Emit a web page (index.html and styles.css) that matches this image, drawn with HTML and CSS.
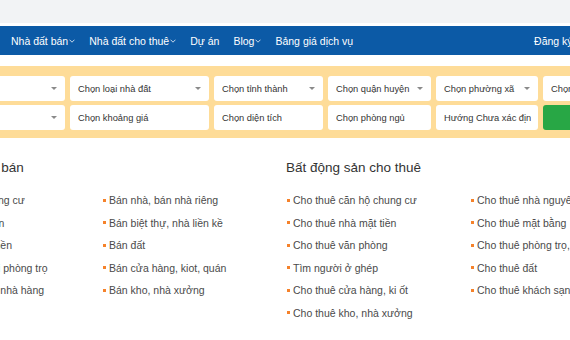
FILE: index.html
```html
<!DOCTYPE html>
<html lang="vi">
<head>
<meta charset="utf-8">
<title>Nhà đất</title>
<link rel="stylesheet" href="styles.css">
</head>
<body>
<div class="topbar"></div>
<nav class="nav">
  <div class="nav-inner">
    <a class="nav-item">Nhà đất bán<svg class="chev" viewBox="0 0 6 4"><path d="M0.5 0.7 L3 3.2 L5.5 0.7"/></svg></a>
    <a class="nav-item">Nhà đất cho thuê<svg class="chev" viewBox="0 0 6 4"><path d="M0.5 0.7 L3 3.2 L5.5 0.7"/></svg></a>
    <a class="nav-item">Dự án</a>
    <a class="nav-item">Blog<svg class="chev" viewBox="0 0 6 4"><path d="M0.5 0.7 L3 3.2 L5.5 0.7"/></svg></a>
    <a class="nav-item">Bảng giá dịch vụ</a>
    <div class="nav-right">
      <a class="nav-item">Đăng ký</a>
      <a class="nav-item">Đăng nhập</a>
    </div>
  </div>
</nav>

<section class="search">
  <div class="search-grid">
    <div class="field select"><span>Nhà đất bán</span></div>
    <div class="field select"><span>Chọn loại nhà đất</span></div>
    <div class="field select"><span>Chọn tỉnh thành</span></div>
    <div class="field select"><span>Chọn quận huyện</span></div>
    <div class="field select"><span>Chọn phường xã</span></div>
    <div class="field select"><span>Chọn đường phố</span></div>

    <div class="field select"><span>Chọn dự án</span></div>
    <div class="field"><span>Chọn khoảng giá</span></div>
    <div class="field"><span>Chọn diện tích</span></div>
    <div class="field"><span>Chọn phòng ngủ</span></div>
    <div class="field"><span>Hướng Chưa xác định</span></div>
    <div class="btn-search">Tìm kiếm</div>
  </div>
</section>

<section class="listing">
  <div class="group">
    <h2 class="group-title">Bất động sản bán</h2>
    <ul class="links">
      <li>Bán căn hộ chung cư</li>
      <li>Bán nhà, bán nhà riêng</li>
      <li>Bán nhà mặt tiền</li>
      <li>Bán biệt thự, nhà liền kề</li>
      <li>Bán dự án đất nền</li>
      <li>Bán đất</li>
      <li>Bán căn hộ mini phòng trọ</li>
      <li>Bán cửa hàng, kiot, quán</li>
      <li>Bán khách sạn, nhà hàng</li>
      <li>Bán kho, nhà xưởng</li>
    </ul>
  </div>
  <div class="group">
    <h2 class="group-title">Bất động sản cho thuê</h2>
    <ul class="links">
      <li>Cho thuê căn hộ chung cư</li>
      <li>Cho thuê nhà nguyên căn</li>
      <li>Cho thuê nhà mặt tiền</li>
      <li>Cho thuê mặt bằng</li>
      <li>Cho thuê văn phòng</li>
      <li>Cho thuê phòng trọ, nhà trọ</li>
      <li>Tìm người ở ghép</li>
      <li>Cho thuê đất</li>
      <li>Cho thuê cửa hàng, ki ốt</li>
      <li>Cho thuê khách sạn, nhà hàng</li>
      <li>Cho thuê kho, nhà xưởng</li>
    </ul>
  </div>
</section>
</body>
</html>
```
FILE: styles.css
```css
* { box-sizing: border-box; }
html, body { margin: 0; padding: 0; }
body {
  font-family: "Liberation Sans", Arial, sans-serif;
  font-size: 10.5px;
  color: #444;
  background: #fff;
  overflow: hidden;
  width: 570px;
}
.topbar {
  height: 23px;
  background: #f2f3f5;
  margin-bottom: 3px;
}
.nav {
  height: 29px;
  background: #0c5aa6;
  overflow: hidden;
}
.nav-inner {
  width: 650px;
  height: 29px;
  display: flex;
  align-items: center;
  gap: 14px;
  padding: 0 11px;
}
.nav-item {
  color: #fff;
  font-size: 10.5px;
  white-space: nowrap;
  display: flex;
  align-items: center;
}
.chev {
  width: 6px;
  height: 4px;
  margin-left: 1px;
  fill: none;
  stroke: #dce6f2;
  stroke-width: 0.9;
}
.nav-right {
  margin-left: auto;
  display: flex;
  gap: 15px;
}
.search {
  margin-top: 11px;
  background: #fedc98;
  padding: 10px 0 8px;
  overflow: hidden;
}
.search-grid {
  display: grid;
  grid-template-columns: 135px 139px 109px 103px 102px 102px;
  grid-auto-rows: 25px;
  column-gap: 5px;
  row-gap: 4px;
  margin-left: -70px;
  width: 700px;
}
.field {
  background: #fff;
  border-radius: 3px;
  display: flex;
  align-items: center;
  padding: 0 7px 0 8px;
  color: #333;
  font-size: 9.3px;
  overflow: hidden;
  white-space: nowrap;
}
.field span {
  overflow: hidden;
  flex: 1;
}
.select::after {
  content: "";
  flex: none;
  border-left: 3px solid transparent;
  border-right: 3px solid transparent;
  border-top: 3.5px solid #8a8a8a;
  margin-left: 6px;
  margin-right: 1px;
}
.btn-search {
  background: #28a745;
  border-radius: 3px;
  color: #fff;
  display: flex;
  align-items: center;
  justify-content: center;
}
.listing {
  display: flex;
  margin-left: -81px;
  margin-top: 20px;
}
.group {
  width: 368px;
  flex: none;
}
.group-title {
  margin: 0 0 11px -1px;
  font-size: 13.5px;
  font-weight: normal;
  line-height: 20px;
  color: #333;
}
.links {
  list-style: none;
  margin: 0;
  padding: 0;
  display: grid;
  grid-template-columns: 184px 184px;
  grid-auto-rows: 22.5px;
  align-items: center;
}
.links li {
  white-space: nowrap;
  color: #4a4a4a;
  display: flex;
  align-items: center;
}
.links li::before {
  content: "";
  width: 3px;
  height: 3px;
  background: #f5822b;
  margin-right: 3px;
  flex: none;
}
```
